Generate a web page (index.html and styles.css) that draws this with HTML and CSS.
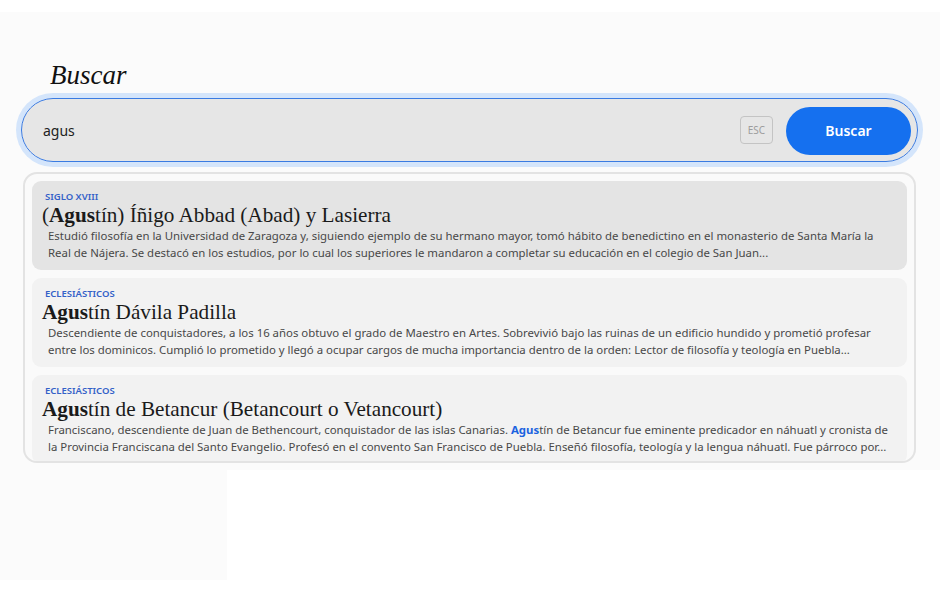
FILE: index.html
```html
<!DOCTYPE html>
<html lang="es">
<head>
<meta charset="utf-8">
<title>Buscar</title>
<link rel="stylesheet" href="styles.css">
</head>
<body>
<div class="page">
  <h1 class="heading">Buscar</h1>
  <div class="search">
    <div class="field">
      <span class="query">agus</span>
      <span class="esc">ESC</span>
      <button class="go">Buscar</button>
    </div>
  </div>
  <div class="results">
    <div class="item active">
      <div class="cat">Siglo XVIII</div>
      <div class="title">(<b>Agus</b>tín) Íñigo Abbad (Abad) y Lasierra</div>
      <p class="desc">Estudió filosofía en la Universidad de Zaragoza y, siguiendo ejemplo de su hermano mayor, tomó hábito de benedictino en el monasterio de Santa María la Real de Nájera. Se destacó en los estudios, por lo cual los superiores le mandaron a completar su educación en el colegio de San Juan...</p>
    </div>
    <div class="item">
      <div class="cat">Eclesiásticos</div>
      <div class="title"><b>Agus</b>tín Dávila Padilla</div>
      <p class="desc">Descendiente de conquistadores, a los 16 años obtuvo el grado de Maestro en Artes. Sobrevivió bajo las ruinas de un edificio hundido y prometió profesar entre los dominicos. Cumplió lo prometido y llegó a ocupar cargos de mucha importancia dentro de la orden: Lector de filosofía y teología en Puebla...</p>
    </div>
    <div class="item">
      <div class="cat">Eclesiásticos</div>
      <div class="title"><b>Agus</b>tín de Betancur (Betancourt o Vetancourt)</div>
      <p class="desc">Franciscano, descendiente de Juan de Bethencourt, conquistador de las islas Canarias. <b class="hit">Agus</b>tín de Betancur fue eminente predicador en náhuatl y cronista de la Provincia Franciscana del Santo Evangelio. Profesó en el convento San Francisco de Puebla. Enseñó filosofía, teología y la lengua náhuatl. Fue párroco por...</p>
    </div>
  </div>
</div>
</body>
</html>
```

FILE: styles.css
```css
html, body {
  margin: 0;
  padding: 0;
}
body {
  width: 940px;
  height: 594px;
  overflow: hidden;
  font-family: "Noto Sans", "Open Sans", sans-serif;
  background:
    linear-gradient(#fbfbfb, #fbfbfb) 0 12px / 100% 458px no-repeat,
    linear-gradient(#fbfbfb, #fbfbfb) 0 12px / 227px 568px no-repeat,
    #ffffff;
}
.page {
  padding: 0 0 0 21px;
  width: 897px;
}
.heading {
  margin: 0;
  padding: 58px 0 0 29px;
  height: 40px;
  font-family: "Liberation Serif", serif;
  font-style: italic;
  font-weight: 400;
  font-size: 27px;
  line-height: 34px;
  color: #111;
}
.search {
  border-radius: 40px;
  box-shadow: 0 0 0 5px #d4e5fb;
}
.field {
  box-sizing: border-box;
  height: 64px;
  border: 1px solid #3a7be2;
  border-radius: 40px;
  background: #e6e6e6;
  display: flex;
  align-items: center;
  padding: 0 6px 0 21px;
}
.query {
  flex: 1;
  font-size: 14px;
  color: #222;
}
.esc {
  box-sizing: border-box;
  width: 33px;
  height: 28px;
  border: 1px solid #c4c4c4;
  border-radius: 4px;
  display: flex;
  align-items: center;
  justify-content: center;
  font-size: 10px;
  color: #9d9d9d;
  margin-right: 13px;
}
.go {
  width: 125px;
  height: 48px;
  border: 0;
  border-radius: 24px;
  background: #1570ef;
  color: #fff;
  font-family: "Noto Sans", sans-serif;
  font-weight: 600;
  font-size: 14px;
  margin-top: 1px;
}
.results {
  box-sizing: border-box;
  margin: 10px 2px 0 2px;
  height: 291px;
  border: 2px solid #e3e3e3;
  border-radius: 14px;
  background: #fafafa;
  overflow: hidden;
  padding: 7px 7px;
  display: flex;
  flex-direction: column;
  gap: 8px;
}
.item {
  flex: none;
  background: #f2f2f2;
  border-radius: 9px;
  padding: 10px 14px 9px 10px;
}
.item.active {
  background: #e4e4e4;
}
.cat {
  padding-left: 3px;
  font-size: 9.5px;
  font-weight: 600;
  line-height: 12px;
  text-transform: uppercase;
  color: #3461c8;
}
.title {
  font-family: "Liberation Serif", serif;
  font-size: 21.2px;
  line-height: 24px;
  color: #1a1a1a;
}
.title b {
  font-weight: 700;
}
.desc {
  margin: 0 0 0 6px;
  font-size: 11.4px;
  line-height: 17px;
  color: #484848;
}
.hit {
  color: #1b63e0;
}
```
